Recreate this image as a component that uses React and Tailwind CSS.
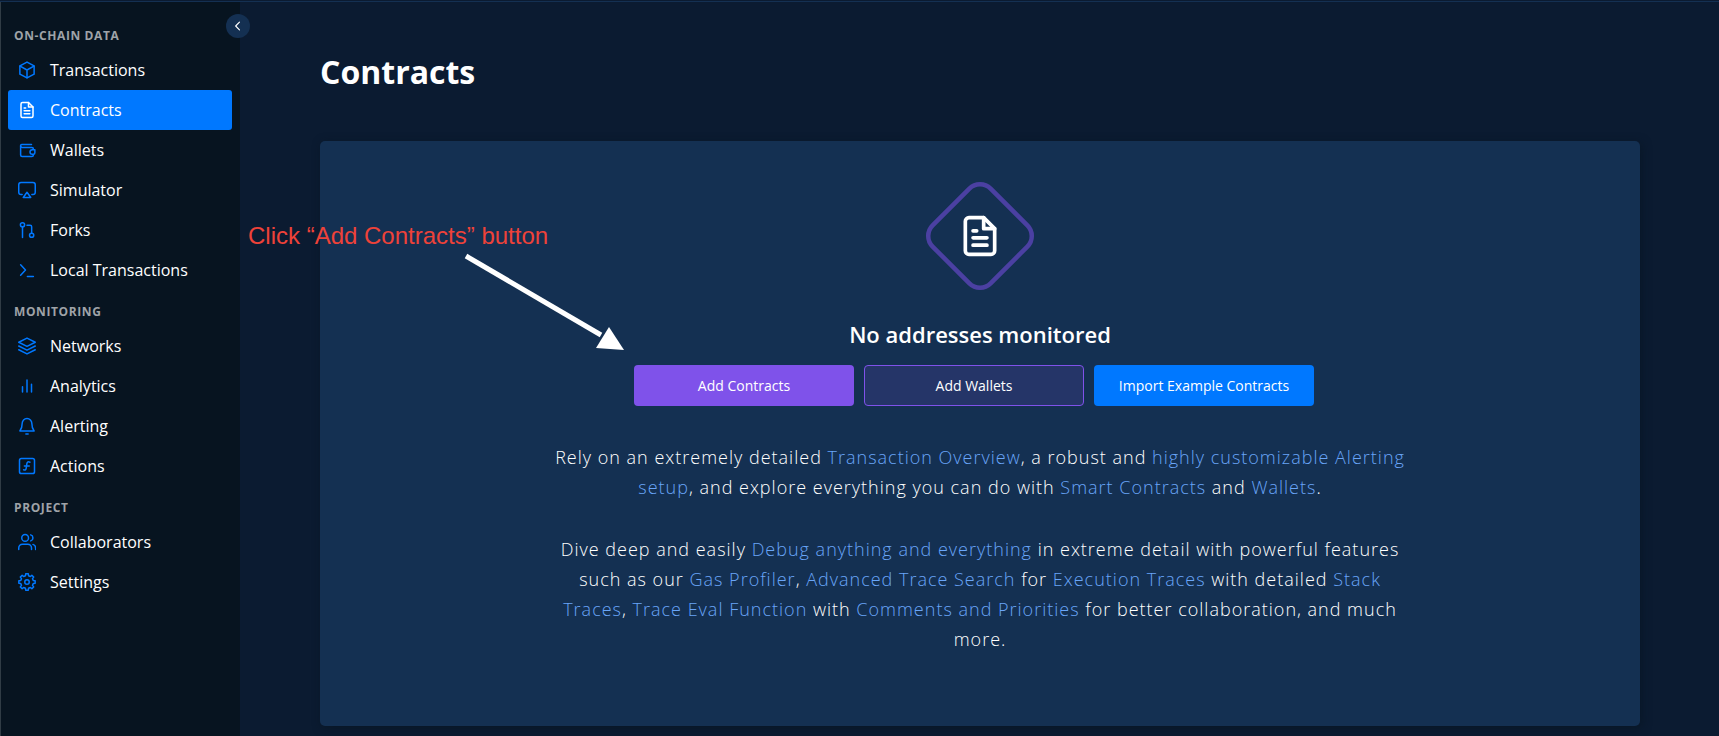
import React from "react";

function Icon({ children, className = "size-[18px]", strokeWidth = 2 }) {
  return (
    <svg
      viewBox="0 0 24 24"
      fill="none"
      stroke="currentColor"
      strokeWidth={strokeWidth}
      strokeLinecap="round"
      strokeLinejoin="round"
      aria-hidden="true"
      className={className + " shrink-0"}
    >
      {children}
    </svg>
  );
}

/* Eight-toothed outline: each tooth is a flat top between two valleys. */
function gearPath(teeth, outer, inner) {
  const step = (Math.PI * 2) / teeth;
  const point = (radius, angle) =>
    (12 + radius * Math.sin(angle)).toFixed(2) + " " + (12 - radius * Math.cos(angle)).toFixed(2);
  const points = [];
  for (let i = 0; i < teeth; i += 1) {
    const a = i * step;
    points.push(
      point(inner, a - step * 0.3),
      point(outer, a - step * 0.2),
      point(outer, a + step * 0.2),
      point(inner, a + step * 0.3)
    );
  }
  return "M" + points.join("L") + "Z";
}

const icons = {
  box: (
    <>
      <path d="M12 1.5 21.5 6.5v11L12 22.5 2.5 17.5v-11Z" />
      <path d="M2.8 6.8 12 12l9.2-5.2M12 12v10.3" />
    </>
  ),
  document: (
    <>
      <path d="M14 2H6a2 2 0 0 0-2 2v16a2 2 0 0 0 2 2h12a2 2 0 0 0 2-2V8Z" />
      <path d="M14 2v6h6M8.2 9.2h2M8.200 13h7.600M8.200 17h7.600" />
    </>
  ),
  wallet: (
    <>
      <path d="M18 4.500H5A1.500 1.500 0 0 0 3.500 6v12.500a2 2 0 0 0 2 2h13a2 2 0 0 0 2-2" />
      <path d="M3.500 6.500A2 2 0 0 0 5.500 8.500h13a2 2 0 0 1 2 2" />
      <path d="M22.500 11.500h-3.500a3 3 0 0 0 0 6h1.500a2 2 0 0 0 2-2Z" />
    </>
  ),
  simulator: (
    <>
      <path d="M5.500 18H4a3 3 0 0 1-3-3V5a3 3 0 0 1 3-3h16a3 3 0 0 1 3 3v10a3 3 0 0 1-3 3h-1.500" />
      <path d="m12 15 5 7H7Z" />
    </>
  ),
  forks: (
    <>
      <circle cx="6" cy="5" r="2.800" />
      <circle cx="18.200" cy="19" r="2.800" />
      <path d="M6 8v14M12 5.500h4.200a2 2 0 0 1 2 2v8.500" />
    </>
  ),
  terminal: <path d="m3.500 5 6.500 7-6.500 7M12.500 20.500h8" />,
  layers: (
    <>
      <path d="m12 1.500 11 5.500-11 5.500L1 7Z" />
      <path d="m1 12 11 5.500L23 12M1 17l11 5.500L23 17" />
    </>
  ),
  chart: <path d="M6 13v7M12 4v16M18 9.500v10.500" />,
  bell: (
    <>
      <path d="M18.500 9a6.500 7 0 0 0-13 0c0 6-1.500 7.500-3 9.500h19c-1.500-2-3-3.500-3-9.500Z" />
      <path d="M10.500 22.500h3" />
    </>
  ),
  action: (
    <>
      <rect x="2" y="2" width="20" height="20" rx="2.500" />
      <path d="M16 7c-3-1.500-4 0-4.300 2.500l-.7 5C10.700 17 9.500 18 7.500 17M8.500 12H15" />
    </>
  ),
  users: (
    <>
      <circle cx="9.500" cy="6.500" r="4.500" />
      <path d="M1 22v-2a5 5 0 0 1 5-5h7a5 5 0 0 1 5 5v2M17 2.500a4.200 4.200 0 0 1 0 8M20 15.200a5 5 0 0 1 3.500 4.800v2" />
    </>
  ),
  gear: (
    <>
      <circle cx="12" cy="12" r="3" />
      <path d={gearPath(8, 11, 8.6)} />
    </>
  ),
};

const sections = [
  {
    title: "ON-CHAIN DATA",
    items: [
      ["Transactions", "box"],
      ["Contracts", "document"],
      ["Wallets", "wallet"],
      ["Simulator", "simulator"],
      ["Forks", "forks"],
      ["Local Transactions", "terminal"],
    ],
  },
  {
    title: "MONITORING",
    items: [
      ["Networks", "layers"],
      ["Analytics", "chart"],
      ["Alerting", "bell"],
      ["Actions", "action"],
    ],
  },
  {
    title: "PROJECT",
    items: [
      ["Collaborators", "users"],
      ["Settings", "gear"],
    ],
  },
];

function NavItem({ label, icon, active }) {
  return (
    <li>
      <a
        href="#"
        aria-current={active ? "page" : undefined}
        className={
          "flex h-10 items-center gap-[14px] rounded-[3px] px-[10px] text-base text-white " +
          (active ? "bg-[#0078ff]" : "")
        }
      >
        <span className={"flex " + (active ? "text-white" : "text-[#0078ff]")}>
          <Icon>{icons[icon]}</Icon>
        </span>
        {label}
      </a>
    </li>
  );
}

function Sidebar() {
  return (
    <aside className="relative w-60 shrink-0 border-l border-[#303c45] bg-[#071420] pt-3">
      <nav aria-label="Main" className="pr-2 pl-[7px]">
        {sections.map((section) => (
          <section key={section.title}>
            <h2 className="flex h-9 items-center px-[6px] pt-2 text-xs font-bold tracking-wider text-[#9fa3a8]">
              {section.title}
            </h2>
            <ul>
              {section.items.map(([label, icon]) => (
                <NavItem key={label} label={label} icon={icon} active={label === "Contracts"} />
              ))}
            </ul>
          </section>
        ))}
      </nav>
      <button
        type="button"
        aria-label="Collapse sidebar"
        className="absolute top-3 -right-[10px] flex size-6 items-center justify-center rounded-full bg-[#143052] text-white"
      >
        <Icon className="size-[14px]" strokeWidth={2}>
          <path d="m14.500 5.500-6.500 6.500 6.500 6.500" />
        </Icon>
      </button>
    </aside>
  );
}

function TextLink({ children }) {
  return (
    <a href="#" className="text-[#69a5f8]">
      {children}
    </a>
  );
}

function EmptyState() {
  return (
    <section className="flex min-h-[585px] flex-col items-center rounded-[5px] bg-[#143052] px-6 pt-10 shadow-[2px_2px_10px_rgba(7,20,32,0.6)]">
      <div className="relative flex size-[110px] items-center justify-center text-white">
        <svg viewBox="0 0 110 110" fill="none" aria-hidden="true" className="absolute inset-0 size-full">
          <rect
            x="14"
            y="14"
            width="82"
            height="82"
            rx="15"
            stroke="#4b40a2"
            strokeWidth="4.500"
            transform="rotate(45 55 55)"
          />
        </svg>
        <Icon className="size-11">{icons.document}</Icon>
      </div>
      <h2 className="mt-[28px] text-[22px] leading-[30px] font-semibold text-white">No addresses monitored</h2>
      <div className="mt-4 flex gap-[10px] pr-3 text-sm text-white">
        <button type="button" className="h-[41px] w-[220px] rounded-[4px] bg-[#7f52ea]">
          Add Contracts
        </button>
        <button type="button" className="h-[41px] w-[220px] rounded-[4px] border border-[#7f52ea] bg-[#253568]">
          Add Wallets
        </button>
        <button type="button" className="h-[41px] w-[220px] rounded-[4px] bg-[#0078ff]">
          Import Example Contracts
        </button>
      </div>
      <div className="mt-9 flex max-w-[860px] flex-col gap-8 text-center text-lg leading-[30px] font-light tracking-[1px] text-white">
        <p>
          Rely on an extremely detailed <TextLink>Transaction Overview</TextLink>, a robust and{" "}
          <TextLink>highly customizable Alerting setup</TextLink>, and explore everything you can do with{" "}
          <TextLink>Smart Contracts</TextLink> and <TextLink>Wallets</TextLink>.
        </p>
        <p>
          Dive deep and easily <TextLink>Debug anything and everything</TextLink> in extreme detail with powerful
          features such as our <TextLink>Gas Profiler</TextLink>, <TextLink>Advanced Trace Search</TextLink> for{" "}
          <TextLink>Execution Traces</TextLink> with detailed <TextLink>Stack Traces</TextLink>,{" "}
          <TextLink>Trace Eval Function</TextLink> with <TextLink>Comments and Priorities</TextLink> for better
          collaboration, and much more.
        </p>
      </div>
    </section>
  );
}

function Callout() {
  return (
    <div className="pointer-events-none absolute top-[218px] left-2 w-[380px]">
      <p className="font-['Liberation_Sans',Arial,sans-serif] text-2xl leading-8 text-[#ee4239]">
        Click “Add Contracts” button
      </p>
      <svg viewBox="0 0 160 98" aria-hidden="true" className="ml-[216px] h-[98px] w-[160px]">
        <path d="M2 4 137 83" stroke="white" strokeWidth="5" />
        <path d="m160 98-28-2 13-21Z" fill="white" />
      </svg>
    </div>
  );
}

export default function App() {
  return (
    <div className="flex min-h-screen flex-col bg-[#0b1b31] font-['Open_Sans','Noto_Sans',sans-serif]">
      <div className="mt-px h-px bg-[#143052]" />
      <div className="flex grow">
        <Sidebar />
        <main className="relative min-w-0 grow pt-12 pr-[79px] pb-[10px] pl-20">
          <h1 className="text-[32px] leading-[44px] font-bold text-white">Contracts</h1>
          <div className="mt-[47px]">
            <EmptyState />
          </div>
          <Callout />
        </main>
      </div>
    </div>
  );
}
